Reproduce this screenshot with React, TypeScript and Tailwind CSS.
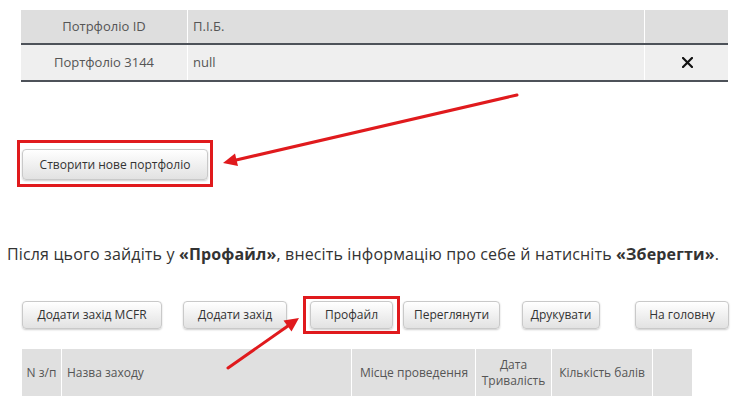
import React from "react";

const btn =
  "h-[28px] flex items-center justify-center rounded-[4px] border border-[#c9c9c9] bg-gradient-to-b from-white to-[#e2e2e2] shadow-[0_1px_2px_rgba(0,0,0,0.2)] text-[12px] text-[#333]";

export default function App() {
  return (
    <div
      className="relative w-[737px] h-[396px] overflow-hidden bg-white"
      style={{ fontFamily: '"Open Sans", "Noto Sans", sans-serif' }}
    >
      {/* top table */}
      <div className="ml-[21px] mt-[10px] w-[707px] text-[13px] text-[#555]">
        <div className="grid grid-cols-[167px_457px_83px] h-[35px] bg-[#dedede] border-b-2 border-[#4d5259]">
          <div className="flex items-center justify-center border-r border-white">Потрфоліо ID</div>
          <div className="flex items-center pl-[5px] border-r border-white">П.І.Б.</div>
          <div />
        </div>
        <div className="grid grid-cols-[167px_457px_83px] h-[37px] bg-[#efefef] border-b-2 border-[#4d5259]">
          <div className="flex items-center justify-center border-r border-white">Портфоліо 3144</div>
          <div className="flex items-center pl-[5px] border-r border-white">null</div>
          <div className="flex items-center justify-center pl-[2px]">
            <svg width="11" height="11" viewBox="0 0 11 11">
              <path d="M1 1 L10 10 M10 1 L1 10" stroke="#111" strokeWidth="2.2" strokeLinecap="square" />
            </svg>
          </div>
        </div>
      </div>

      {/* create portfolio button */}
      <div className="ml-[17px] mt-[58px] w-[196px] h-[47px] border-[3px] border-[#e01a1d] flex items-center pl-[2px] pt-[2px]">
        <div className={btn + " w-[186px] h-[31px] text-[12.5px]"}>Створити нове портфоліо</div>
      </div>

      {/* paragraph */}
      <p className="ml-[7px] mt-[57px] text-[16px] tracking-[0.15px] leading-[20px] text-[#333] whitespace-nowrap">
        Після цього зайдіть у <b>«Профайл»</b>, внесіть інформацію про себе й натисніть <b>«Зберегти»</b>.
      </p>

      {/* buttons row */}
      <div className="mt-[37px] ml-[22px] flex items-center h-[28px]">
        <div className={btn + " w-[140px]"}>Додати захід MCFR</div>
        <div className={btn + " w-[104px] ml-[21px]"}>Додати захід</div>
        <div className="relative ml-[23px] w-[83px] h-[28px]">
          <div className="absolute -left-[7px] -top-[5px] w-[97px] h-[38px] border-[3px] border-[#e01a1d]" />
          <div className={btn + " relative w-[83px]"}>Профайл</div>
        </div>
        <div className={btn + " w-[97px] ml-[10px]"}>Переглянути</div>
        <div className={btn + " w-[78px] ml-[22px]"}>Друкувати</div>
        <div className={btn + " w-[94px] ml-[35px]"}>На головну</div>
      </div>

      {/* bottom table */}
      <div className="ml-[22px] mt-[20px] w-[671px] h-[60px] bg-[#e0e0e0] grid grid-cols-[40px_290px_124px_76px_101px_40px] text-[12px] text-[#555]">
        <div className="flex items-center justify-center border-r border-white h-[48px]">N з/п</div>
        <div className="flex items-center pl-[5px] border-r border-white h-[48px]">Назва заходу</div>
        <div className="flex items-center pl-[8px] border-r border-white h-[48px]">Місце проведення</div>
        <div className="flex items-center justify-center text-center leading-[16px] border-r border-white h-[48px]">
          Дата
          <br />
          Тривалість
        </div>
        <div className="flex items-center justify-center border-r border-white h-[48px]">Кількість балів</div>
        <div className="border-r border-white h-[48px]" />
      </div>

      {/* annotation arrows */}
      <svg className="absolute left-0 top-0 pointer-events-none" width="737" height="396">
        <line x1="517" y1="95" x2="234" y2="160.5" stroke="#e01a1d" strokeWidth="3" strokeLinecap="round" />
        <polygon points="223,163 238,166 235,153.5" fill="#e01a1d" />
        <line x1="228" y1="368" x2="290" y2="324.5" stroke="#e01a1d" strokeWidth="3" strokeLinecap="round" />
        <polygon points="299,318 291.5,331.5 283.5,320.5" fill="#e01a1d" />
      </svg>
    </div>
  );
}
